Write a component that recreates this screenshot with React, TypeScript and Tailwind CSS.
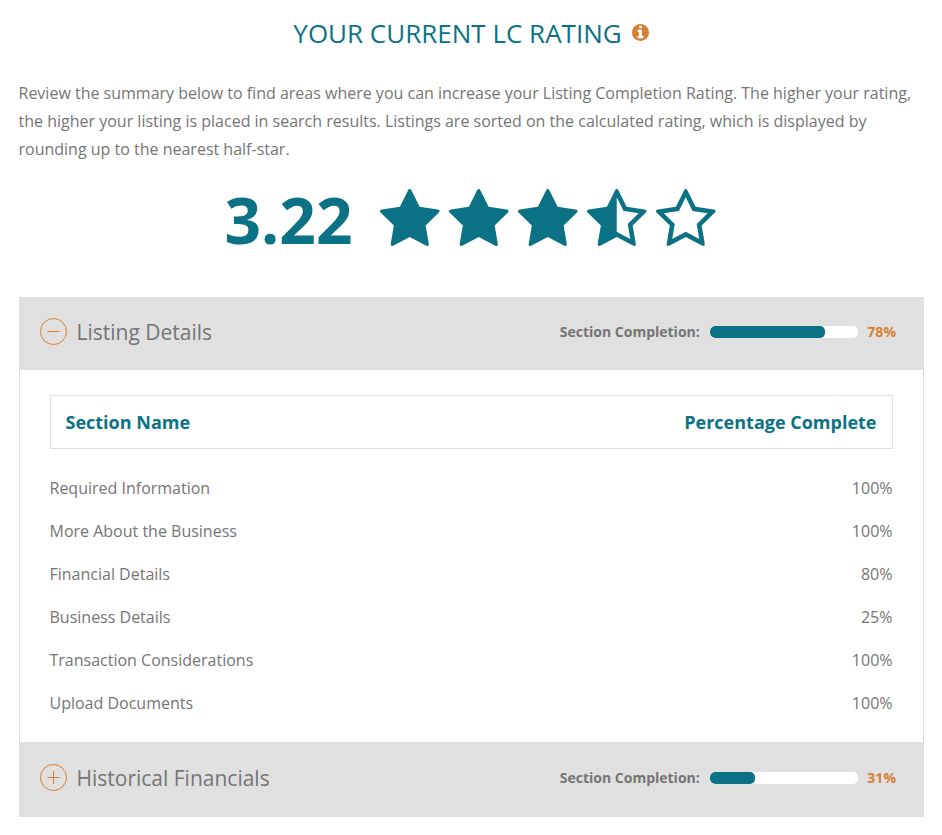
import React from "react";

const rows = [
  ["Required Information", "100%"],
  ["More About the Business", "100%"],
  ["Financial Details", "80%"],
  ["Business Details", "25%"],
  ["Transaction Considerations", "100%"],
  ["Upload Documents", "100%"],
];

const starPaths = {
  full: "M1728 647q0 22-26 48l-363 354 86 500q1 7 1 20 0 21-10.5 35.5t-30.5 14.5q-19 0-40-12l-449-236-449 236q-22 12-40 12-21 0-31.5-14.5t-10.5-35.5q0-6 2-20l86-500-364-354q-25-27-25-48 0-37 56-46l502-73 225-455q19-41 49-41t49 41l225 455 502 73q56 9 56 46z",
  half: "M1250 957l257-250-356-52-66-10-30-60-159-322v963l59 31 318 168-60-355-12-66zm452-262l-363 354 86 500q5 33-6 51.5t-34 18.5q-17 0-40-12l-449-236-449 236q-23 12-40 12-23 0-34-18.5t-6-51.5l86-500-364-354q-32-32-23-59.5t54-34.5l502-73 225-455q20-41 49-41 28 0 49 41l225 455 502 73q45 7 54 34.5t-24 59.5z",
  empty: "M1201 1004l306-297-422-62-189-382-189 382-422 62 306 297-73 421 378-199 377 199zm527-357q0 22-26 48l-363 354 86 500q1 7 1 20 0 50-41 50-19 0-40-12l-449-236-449 236q-22 12-40 12-21 0-31.5-14.5t-10.5-35.5q0-6 2-20l86-500-364-354q-25-27-25-48 0-37 56-46l502-73 225-455q19-41 49-41t49 41l225 455 502 73q56 9 56 46z",
};

function Star({ kind }: { kind: keyof typeof starPaths }) {
  return (
    <svg viewBox="71 32 1664 1588" className="h-[57px] w-[60px]" fill="currentColor">
      <path d={starPaths[kind]} />
    </svg>
  );
}

function InfoIcon() {
  return (
    <svg viewBox="128 128 1536 1536" className="mb-px ml-[10px] h-[17px] w-[17px] text-[#d97f32]" fill="currentColor">
      <path d="M1152 1376v-160q0-14-9-23t-23-9h-96v-512q0-14-9-23t-23-9h-320q-14 0-23 9t-9 23v160q0 14 9 23t23 9h96v320h-96q-14 0-23 9t-9 23v160q0 14 9 23t23 9h448q14 0 23-9t9-23zm-128-896v-160q0-14-9-23t-23-9h-192q-14 0-23 9t-9 23v160q0 14 9 23t23 9h192q14 0 23-9t9-23zm640 416q0 209-103 385.5t-279.500 279.500-385.500 103-385.500-103-279.500-279.500-103-385.500 103-385.500 279.500-279.500 385.500-103 385.500 103 279.500 279.500 103 385.500z" />
    </svg>
  );
}

function SectionHeader({ title, value, open }: { title: string; value: number; open: boolean }) {
  return (
    <div className={`flex items-center bg-[#e0e0e0] pl-[21px] pr-[27.500px] ${open ? "h-[73px] pb-1" : "h-[75px] pb-[3px]"}`}>
      <svg viewBox="0 0 27 27" className={`h-[27px] w-[27px] ${open ? "" : "mb-px"}`} fill="none" stroke="#d97f32">
        <circle cx="13.5" cy="13.5" r="13" />
        <path d={open ? "M7.5 13.5h12" : "M7.5 13.5h12M13.5 7v13"} />
      </svg>
      <span className={`ml-[10px] text-[21px] ${open ? "pt-[2px]" : "pt-px"}`}>{title}</span>
      <span className="ml-auto text-sm font-bold">Section Completion:</span>
      <div className="ml-[10.600px] h-3 w-[148px] overflow-hidden rounded-[5px] bg-white">
        <div className="h-full rounded-[5px] bg-[#0b7285]" style={{ width: `${Math.floor(value * 1.48)}px` }} />
      </div>
      <span className="ml-[9px] text-sm font-bold text-[#d97f32]">{value}%</span>
    </div>
  );
}

export default function App() {
  return (
    <main className="h-[835px] overflow-hidden bg-white px-[18.5px] pt-3 font-['Open_Sans',sans-serif] text-[#757575]">
      <h1 className="flex h-[42px] items-center justify-center text-[26px] text-[#0b7285]">
        YOUR CURRENT LC RATING
        <InfoIcon />
      </h1>
      <p className="mt-[25px] text-base leading-7">
        Review the summary below to find areas where you can increase your Listing Completion Rating. The higher your rating, the higher your listing is placed in search results. Listings are sorted on the calculated rating, which is displayed by rounding up to the nearest half-star.
      </p>
      <div className="mt-[15px] flex h-[84px] items-center justify-center pr-[2px] text-[#0b7285]">
        <span className="mr-[27px] text-[64px] font-bold">3.22</span>
        <div className="mb-[5px] flex gap-[9px]">
          <Star kind="full" />
          <Star kind="full" />
          <Star kind="full" />
          <Star kind="half" />
          <Star kind="empty" />
        </div>
      </div>
      <section className="mt-[35px]">
        <SectionHeader title="Listing Details" value={78} open />
        <div className="h-[372px] border-x border-[#e0e0e0] px-[30px] pt-[25px]">
          <div className="flex h-[54px] items-center justify-between border border-[#e0e0e0] px-[15px] text-lg font-bold text-[#0b7285]">
            <span>Section Name</span><span>Percentage Complete</span>
          </div>
          <div className="pt-[17px]">
            {rows.map(([name, pct]) => (
              <div key={name} className="flex h-[43px] items-center justify-between text-base">
                <span>{name}</span><span>{pct}</span>
              </div>
            ))}
          </div>
        </div>
        <SectionHeader title="Historical Financials" value={31} open={false} />
      </section>
    </main>
  );
}
